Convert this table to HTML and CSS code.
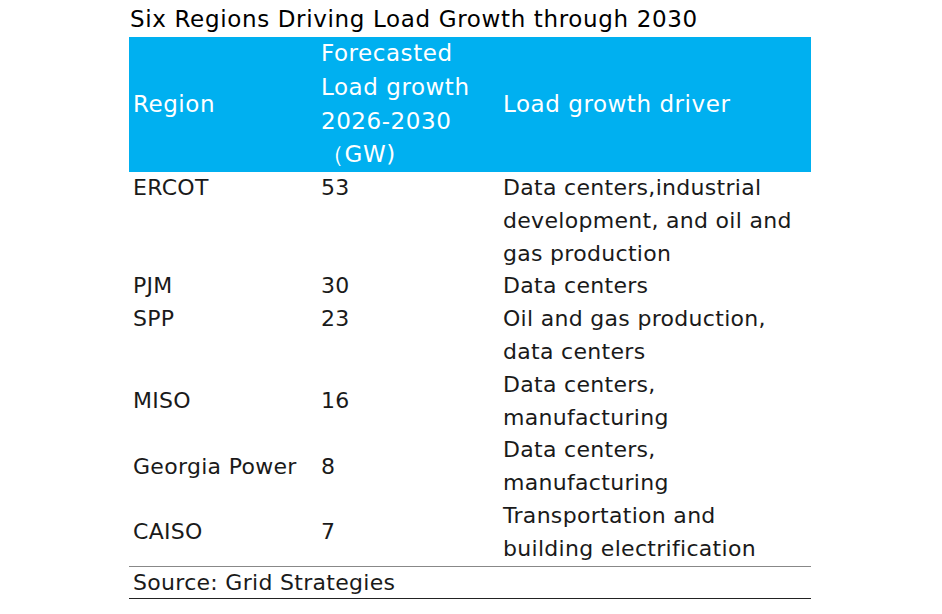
FILE: index.html
```html
<!DOCTYPE html>
<html>
<head>
<meta charset="utf-8">
<link rel="stylesheet" href="styles.css">
</head>
<body>
<div class="wrap">
  <div class="title">Six Regions Driving Load Growth through 2030</div>
  <table class="tbl">
    <colgroup><col class="c1"><col class="c2"><col class="c3"></colgroup>
    <thead>
      <tr>
        <th>Region</th>
        <th>Forecasted Load growth 2026-2030 <span class="gw">（GW)</span></th>
        <th>Load growth driver</th>
      </tr>
    </thead>
    <tbody>
      <tr class="top"><td>ERCOT</td><td>53</td><td>Data centers,industrial development, and oil and gas production</td></tr>
      <tr class="top"><td>PJM</td><td>30</td><td>Data centers</td></tr>
      <tr class="top"><td>SPP</td><td>23</td><td>Oil and gas production, data centers</td></tr>
      <tr><td>MISO</td><td>16</td><td>Data centers, manufacturing</td></tr>
      <tr><td>Georgia Power</td><td>8</td><td>Data centers, manufacturing</td></tr>
      <tr><td>CAISO</td><td>7</td><td>Transportation and building electrification</td></tr>
    </tbody>
    <tfoot>
      <tr><td colspan="3">Source: Grid Strategies</td></tr>
    </tfoot>
  </table>
</div>
</body>
</html>
```
FILE: styles.css
```css
html, body { margin: 0; padding: 0; background: #fff; }
body { font-family: "DejaVu Sans", sans-serif; color: #1a1a1a; }
.wrap { padding: 2px 0 0 129px; width: 682px; }
.title { font-size: 23px; line-height: 35px; padding-left: 1px; color: #000; letter-spacing: 0.65px; }
.tbl { border-collapse: collapse; width: 682px; table-layout: fixed; font-size: 22px; letter-spacing: 0.3px; }
.c1 { width: 188px; }
.c2 { width: 182px; }
.c3 { width: 312px; }
.tbl th { background: #00b0f0; color: #fff; font-weight: normal; font-size: 23px; letter-spacing: 0.55px; text-align: left; line-height: 33.75px; padding: 0 4px; vertical-align: middle; }
.gw { white-space: nowrap; }
.tbl td { line-height: 32.8px; padding: 0 4px; vertical-align: middle; }
.tbl tr.top td { vertical-align: top; }
.tbl tfoot td { border-top: 1px solid #888; border-bottom: 1px solid #222; line-height: 31px; }
```
